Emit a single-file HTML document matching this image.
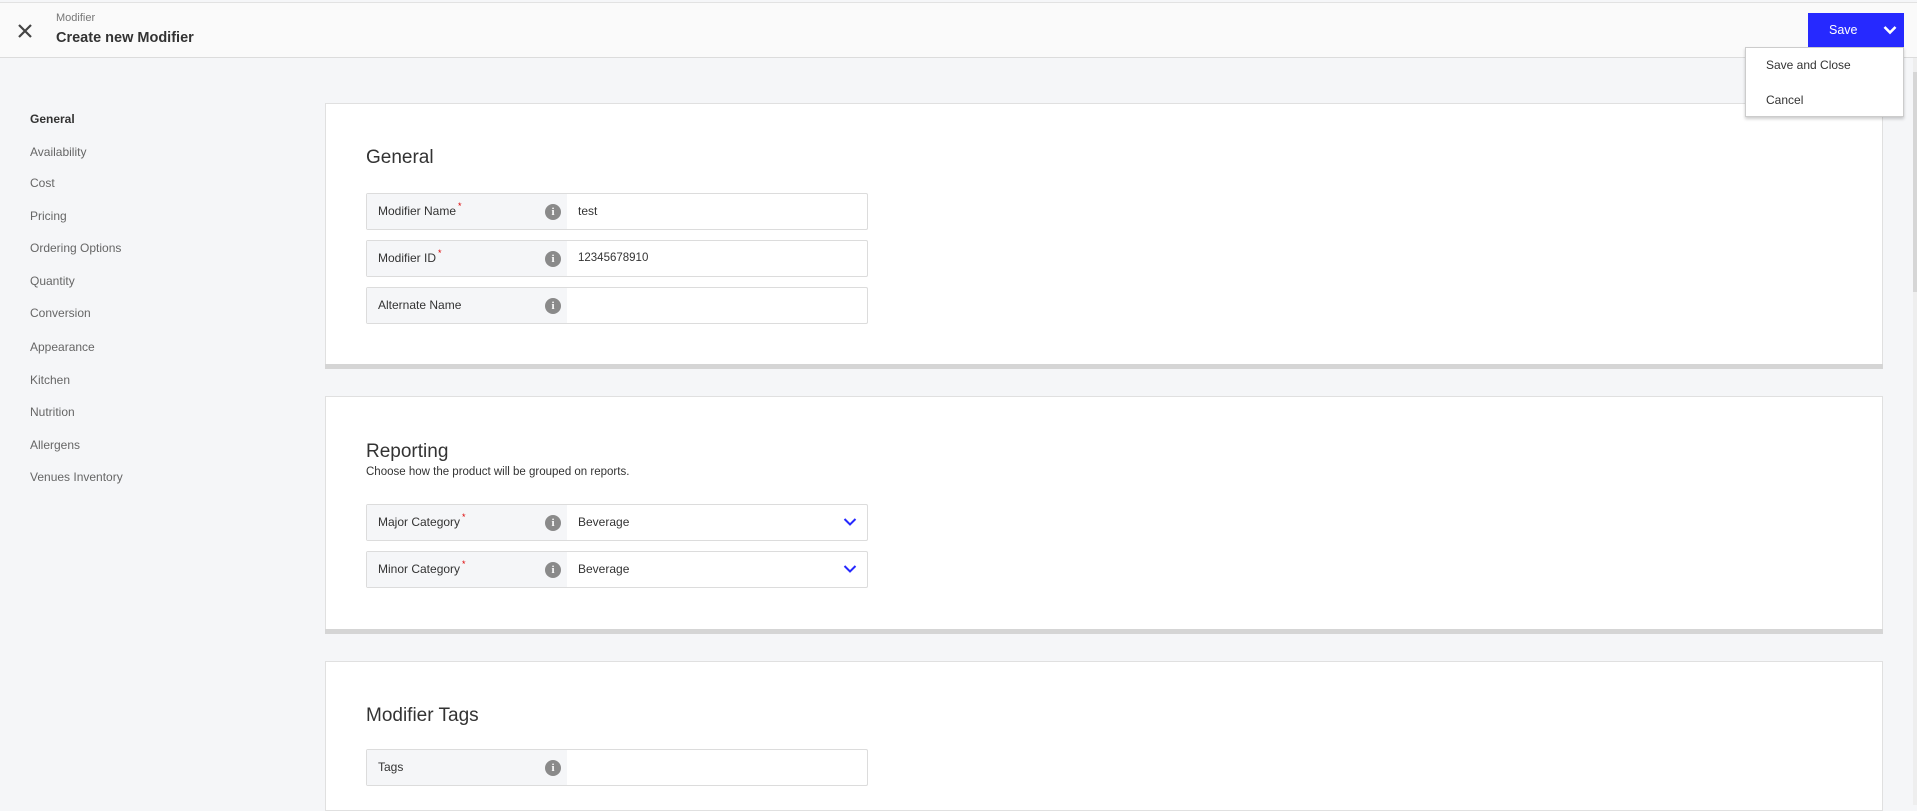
<!DOCTYPE html>
<html><head><meta charset="utf-8"><style>
*{box-sizing:border-box;margin:0;padding:0}
body{width:1917px;height:805px;overflow:hidden;background:#f5f6f8;font-family:"Liberation Sans",sans-serif;color:#333;position:relative}
.abs{position:absolute}
.hdr{left:0;top:2px;width:1917px;height:56px;background:#fafafa;border-top:1px solid #e2e2e2;border-bottom:1px solid #dcdcdc}
.nav{left:30px;font-size:12px;color:#666;line-height:16px}
.card{left:325px;width:1558px;background:#fff;border:1px solid #e0e0e0}
.bar{left:325px;width:1558px;height:5px;background:#d5d5d5}
.h{left:366px;font-size:19px;color:#333;line-height:24px}
.row{left:366px;width:502px;height:37px;border:1px solid #dcdcdc;border-radius:2px;background:#fff}
.lab{position:absolute;left:0;top:0;width:200px;height:35px;background:#f5f6f8;font-size:12px;color:#333;line-height:35px;padding-left:11px}
.lab sup{color:#d00;font-size:9px;vertical-align:top;line-height:24px;margin-left:2px}
.info{position:absolute;left:178px;top:10px;width:16px;height:16px;border-radius:50%;background:#8a8a8a;color:#fff;font:bold 11px/16px "Liberation Serif",serif;text-align:center}
.val{position:absolute;left:211px;top:0;line-height:35px;font-size:12px;color:#333}
.chev{position:absolute;right:10px;top:12px}
</style></head><body>
<div class="abs hdr"></div>
<svg class="abs" style="left:17px;top:23px" width="16" height="16" viewBox="0 0 16 16"><path d="M2 2L14 14M14 2L2 14" stroke="#444" stroke-width="2.2"/></svg>
<div class="abs" style="left:56px;top:12px;font-size:11px;color:#777">Modifier</div>
<div class="abs" style="left:56px;top:30px;font-size:14.5px;font-weight:bold;color:#333">Create new Modifier</div>

<div class="abs" style="left:1913px;top:58px;width:4px;height:747px;background:#eee"></div>
<div class="abs" style="left:1913px;top:72px;width:4px;height:220px;background:#d6d6d6"></div>

<div class="abs nav" style="top:111px;color:#333;font-weight:bold">General</div>
<div class="abs nav" style="top:144px">Availability</div>
<div class="abs nav" style="top:175px">Cost</div>
<div class="abs nav" style="top:208px">Pricing</div>
<div class="abs nav" style="top:240px">Ordering Options</div>
<div class="abs nav" style="top:273px">Quantity</div>
<div class="abs nav" style="top:305px">Conversion</div>
<div class="abs nav" style="top:339px">Appearance</div>
<div class="abs nav" style="top:372px">Kitchen</div>
<div class="abs nav" style="top:404px">Nutrition</div>
<div class="abs nav" style="top:437px">Allergens</div>
<div class="abs nav" style="top:469px">Venues Inventory</div>

<div class="abs card" style="top:103px;height:262px"></div>
<div class="abs bar" style="top:364px"></div>
<div class="abs h" style="top:146px">General</div>
<div class="abs row" style="top:193px"><div class="lab">Modifier Name<sup>*</sup><span class="info">i</span></div><div class="val">test</div></div>
<div class="abs row" style="top:240px"><div class="lab">Modifier ID<sup>*</sup><span class="info">i</span></div><div class="val" style="font-size:11.5px">12345678910</div></div>
<div class="abs row" style="top:287px"><div class="lab">Alternate Name<span class="info">i</span></div></div>

<div class="abs card" style="top:396px;height:234px"></div>
<div class="abs bar" style="top:629px"></div>
<div class="abs h" style="top:440px">Reporting</div>
<div class="abs" style="left:366px;top:466px;font-size:11.5px;color:#333">Choose how the product will be grouped on reports.</div>
<div class="abs row" style="top:504px"><div class="lab">Major Category<sup>*</sup><span class="info">i</span></div><div class="val">Beverage</div>
<svg class="chev" width="14" height="10" viewBox="0 0 14 10"><path d="M1.5 2L7 7.5L12.5 2" stroke="#2629ff" stroke-width="2" fill="none"/></svg></div>
<div class="abs row" style="top:551px"><div class="lab">Minor Category<sup>*</sup><span class="info">i</span></div><div class="val">Beverage</div>
<svg class="chev" width="14" height="10" viewBox="0 0 14 10"><path d="M1.5 2L7 7.5L12.5 2" stroke="#2629ff" stroke-width="2" fill="none"/></svg></div>

<div class="abs card" style="top:661px;height:150px"></div>
<div class="abs h" style="top:704px">Modifier Tags</div>
<div class="abs row" style="top:749px"><div class="lab">Tags<span class="info">i</span></div></div>

<div class="abs" style="left:1808px;top:13px;width:96px;height:34px;background:#2629ff;color:#fff;font-size:12.5px;line-height:34px;padding-left:21px;z-index:10">Save
<svg style="position:absolute;left:75px;top:12px" width="14" height="10" viewBox="0 0 14 10"><path d="M1.5 2L7 7.5L12.5 2" stroke="#fff" stroke-width="2.6" fill="none"/></svg></div>
<div class="abs" style="left:1745px;top:47px;width:159px;height:70px;background:#fff;border:1px solid #ccc;box-shadow:0 2px 3px rgba(0,0,0,.2);font-size:12px;color:#333;z-index:10">
<div style="position:absolute;left:20px;top:10px">Save and Close</div>
<div style="position:absolute;left:20px;top:45px">Cancel</div></div>
</body></html>
